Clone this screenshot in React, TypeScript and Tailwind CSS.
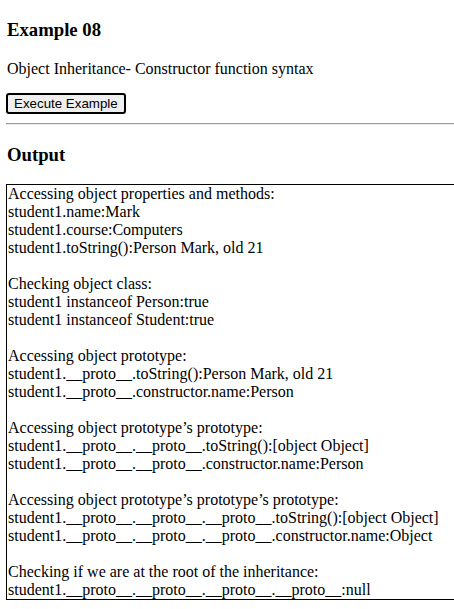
import React from 'react';

const lines: string[] = [
  'Accessing object properties and methods:',
  'student1.name:Mark',
  'student1.course:Computers',
  'student1.toString():Person Mark, old 21',
  '',
  'Checking object class:',
  'student1 instanceof Person:true',
  'student1 instanceof Student:true',
  '',
  'Accessing object prototype:',
  'student1.__proto__.toString():Person Mark, old 21',
  'student1.__proto__.constructor.name:Person',
  '',
  'Accessing object prototype\u2019s prototype:',
  'student1.__proto__.__proto__.toString():[object Object]',
  'student1.__proto__.__proto__.constructor.name:Person',
  '',
  'Accessing object prototype\u2019s prototype\u2019s prototype:',
  'student1.__proto__.__proto__.__proto__.toString():[object Object]',
  'student1.__proto__.__proto__.__proto__.constructor.name:Object',
  '',
  'Checking if we are at the root of the inheritance:',
  'student1.__proto__.__proto__.__proto__.__proto__:null',
];

export default function App() {
  return (
    <div className="w-[454px] h-[609px] overflow-hidden bg-white text-black font-['Liberation_Serif','Times_New_Roman',serif]">
      <div className="w-[520px] pl-[6px] pt-[19px]">
        <h3 className="text-[18.72px] font-bold leading-[21.5px] pl-px">Example 08</h3>
        <p className="mt-[19px] text-[16px] leading-[18.4px] pl-px">Object Inheritance- Constructor function syntax</p>
        <button className="mt-[15px] h-[21px] px-[6px] border-2 border-black rounded-[3px] bg-[#efefef] text-[13.33px] leading-none font-['Liberation_Sans',Arial,sans-serif]">
          Execute Example
        </button>
        <hr className="mt-[8px] border-t border-t-[#9a9a9a] border-b border-b-[#eeeeee]" />
        <h3 className="mt-[19px] text-[18.72px] font-bold leading-[21.5px] pl-px">Output</h3>
        <div className="mt-[19px] border border-black text-[16px] leading-[18px] pl-px">
          {lines.map((l, i) => (
            <div key={i} className="h-[18px] whitespace-nowrap">{l}</div>
          ))}
        </div>
      </div>
    </div>
  );
}
